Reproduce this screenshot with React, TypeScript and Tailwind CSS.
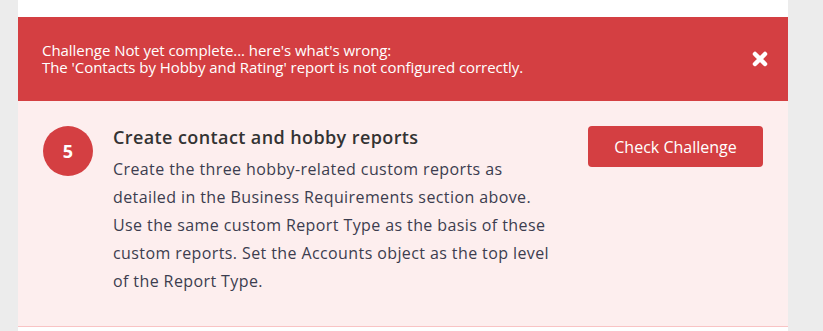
export default function App() {
  return (
    <div className="h-[331px] w-[823px] overflow-hidden bg-[#ececec] pl-[18px] pr-[35px] font-['Open_Sans',sans-serif]">
      <div className="h-full bg-white pt-[17px]">
        {/* error banner */}
        <div className="flex h-[84px] items-center justify-between bg-[#d43f42] pl-[24px] pr-[20px] text-white">
          <div className="text-[15px] leading-[17px] tracking-[-0.05px]">
            <p>Challenge Not yet complete... here's what's wrong:</p>
            <p>The 'Contacts by Hobby and Rating' report is not configured correctly.</p>
          </div>
          <svg width="16" height="16" viewBox="0 0 16 16">
            <path d="M3 3 L13 13 M13 3 L3 13" stroke="white" strokeWidth="4.5" strokeLinecap="round" />
          </svg>
        </div>

        {/* challenge step */}
        <div className="flex h-[226px] border-b border-[#f9c3c4] bg-[#fdeeee] pt-[25px] pl-[25px] pr-[25px]">
          <div className="flex h-[50px] w-[50px] shrink-0 items-center justify-center rounded-full bg-[#d43f42] text-[18px] font-bold text-white">
            5
          </div>
          <div className="ml-[20px] w-[450px]">
            <h3 className="mt-[-3px] text-[18px] font-semibold leading-[28px] tracking-[0.4px] text-[#333333]">Create contact and hobby reports</h3>
            <p className="mt-[4px] text-[16px] leading-[28px] tracking-[0.4px] text-[#3c3d4f]">
              Create the three hobby-related custom reports as<br />
              detailed in the Business Requirements section above.<br />
              Use the same custom Report Type as the basis of these<br />
              custom reports. Set the Accounts object as the top level<br />
              of the Report Type.
            </p>
          </div>
          <div className="ml-auto">
            <button className="h-[41px] w-[175px] rounded-[4px] bg-[#d43f42] text-[16px] text-white">
              Check Challenge
            </button>
          </div>
        </div>
      </div>
    </div>
  );
}
